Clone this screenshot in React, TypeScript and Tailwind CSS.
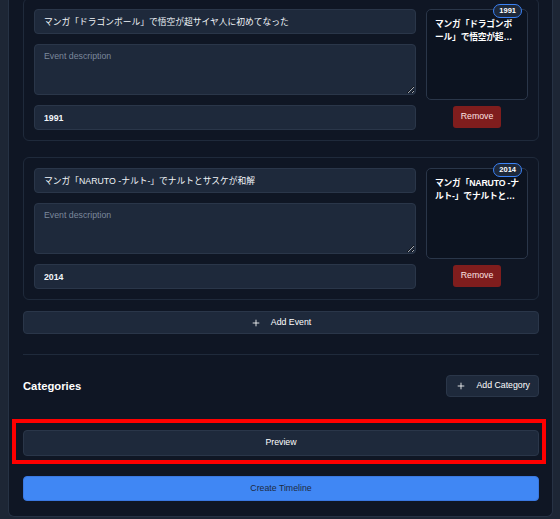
import React from "react";
import { Plus } from "lucide-react";

type Ev = { title: string; year: string };

const events: Ev[] = [
  { title: "マンガ「ドラゴンボール」で悟空が超サイヤ人に初めてなった", year: "1991" },
  { title: "マンガ「NARUTO -ナルト-」でナルトとサスケが和解", year: "2014" },
];

function EventCard({ ev }: { ev: Ev }) {
  return (
    <div className="flex gap-[10px] rounded-[6px] border border-[#1f2a3b] p-[10px]">
      <div className="flex flex-1 flex-col gap-[10px]">
        <input
          readOnly
          defaultValue={ev.title}
          className="h-[25px] w-full rounded-[4px] border border-[#2a3649] bg-[#1e293b] px-[9px] text-[8.75px] text-[#f1f5f9] outline-none"
        />
        <textarea
          placeholder="Event description"
          className="h-[51px] w-full rounded-[4px] border border-[#2a3649] bg-[#1e293b] px-[9px] py-[5px] text-[8.75px] leading-[12.5px] text-[#f1f5f9] outline-none placeholder:text-[#7c889b]"
        />
        <input
          readOnly
          defaultValue={ev.year}
          className="h-[25px] w-full rounded-[4px] border border-[#2a3649] bg-[#1e293b] px-[9px] text-[8.75px] font-bold text-[#f1f5f9] outline-none"
        />
      </div>
      <div className="flex w-[102px] flex-col items-center gap-[6px]">
        <div className="relative h-[91px] w-full rounded-[5px] border border-[#2a3649] bg-[#0c1320] px-[8px] pt-[8px]">
          <span className="absolute right-[5px] top-[-6px] flex h-[14px] items-center rounded-full border-[1.5px] border-[#3b82f6] bg-[#1e293b] px-[5px] text-[7.5px] font-bold leading-none text-white">
            {ev.year}
          </span>
          <p className="line-clamp-2 text-[8.75px] font-bold leading-[12.5px] tracking-[-0.2px] text-white">{ev.title}</p>
        </div>
        <button className="h-[22px] w-[48px] rounded-[3px] bg-[#7f1d1d] text-[8.75px] text-[#fde2e2]">Remove</button>
      </div>
    </div>
  );
}

export default function App() {
  return (
    <div className="relative h-[519px] w-[560px] overflow-hidden bg-[#1d2635] font-['Liberation_Sans','Noto_Sans_CJK_JP',sans-serif]">
      <div className="ml-[8px] mt-[-10px] w-[545px] rounded-b-[6px] border border-t-0 border-[#263244] bg-[#0f1624] pb-[15px] pl-[14px] pr-[13px] pt-[8px]">
        <div className="flex flex-col gap-[16px]">
          {events.map((ev) => (
            <EventCard key={ev.year} ev={ev} />
          ))}
        </div>
        <button className="mt-[11px] flex h-[23px] w-full items-center justify-center gap-[10px] rounded-[4px] border border-[#2a3649] bg-[#1e293b] text-[8.75px] font-medium text-white">
          <Plus size={10} strokeWidth={2} />
          <span>Add Event</span>
        </button>
        <div className="mt-[20px] border-t border-[#1f2a3b] pt-[20px]">
          <div className="flex items-center justify-between">
            <h2 className="text-[11.25px] font-bold text-white">Categories</h2>
            <button className="flex h-[22px] items-center gap-[10px] rounded-[4px] border border-[#2a3649] bg-[#1e293b] pl-[9px] pr-[8px] text-[8.75px] font-medium text-white">
              <Plus size={10} strokeWidth={2} />
              <span>Add Category</span>
            </button>
          </div>
        </div>
        <div className="relative mt-[31px]">
          <button className="h-[26px] w-full rounded-[4px] border border-[#2a3649] bg-[#1e293b] text-[8.75px] font-medium text-white">
            Preview
          </button>
          <div className="pointer-events-none absolute -bottom-[8px] -left-[11px] -right-[7px] -top-[9px] border-[4px] border-[#f00]" />
        </div>
        <button className="mt-[20px] h-[25px] w-full rounded-[4px] border border-[#3a78e0] bg-[#4087f4] text-[8.75px] text-[#1e2a40]">
          Create Timeline
        </button>
      </div>
    </div>
  );
}
